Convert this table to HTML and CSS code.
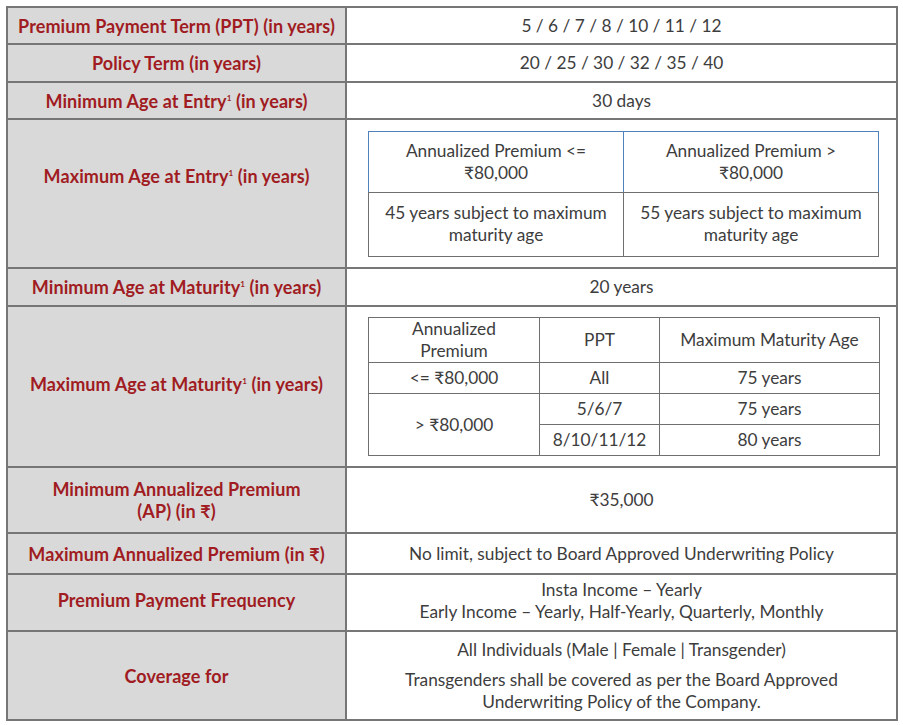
FILE: index.html
```html
<!DOCTYPE html>
<html lang="en">
<head>
<meta charset="utf-8">
<title>Policy Details</title>
<link rel="stylesheet" href="styles.css">
</head>
<body>
<table class="spec">
  <colgroup><col class="col-h"><col class="col-v"></colgroup>
  <tr class="r1"><th>Premium Payment Term (PPT) (in years)</th><td>5 / 6 / 7 / 8 / 10 / 11 / 12</td></tr>
  <tr class="r2"><th>Policy Term (in years)</th><td>20 / 25 / 30 / 32 / 35 / 40</td></tr>
  <tr class="r3"><th>Minimum Age at Entry<sup>1</sup> (in years)</th><td>30 days</td></tr>
  <tr class="r4"><th class="lift-lg">Maximum Age at Entry<sup>1</sup> (in years)</th>
    <td class="nest-cell">
      <table class="inner inner-entry">
        <tr class="ie-head"><td>Annualized Premium &lt;=<br>₹80,000</td><td>Annualized Premium &gt;<br>₹80,000</td></tr>
        <tr class="ie-body"><td>45 years subject to maximum<br>maturity age</td><td>55 years subject to maximum<br>maturity age</td></tr>
      </table>
    </td></tr>
  <tr class="r5"><th>Minimum Age at Maturity<sup>1</sup> (in years)</th><td>20 years</td></tr>
  <tr class="r6"><th class="lift-sm">Maximum Age at Maturity<sup>1</sup> (in years)</th>
    <td class="nest-cell">
      <table class="inner inner-mat">
        <colgroup><col class="m1"><col class="m2"><col class="m3"></colgroup>
        <tr class="im-head"><td>Annualized<br>Premium</td><td>PPT</td><td>Maximum Maturity Age</td></tr>
        <tr class="im-row"><td>&lt;= ₹80,000</td><td>All</td><td>75 years</td></tr>
        <tr class="im-row"><td rowspan="2">&gt; ₹80,000</td><td>5/6/7</td><td>75 years</td></tr>
        <tr class="im-row"><td>8/10/11/12</td><td>80 years</td></tr>
      </table>
    </td></tr>
  <tr class="r7"><th>Minimum Annualized Premium<br>(AP) (in ₹)</th><td>₹35,000</td></tr>
  <tr class="r8"><th>Maximum Annualized Premium (in ₹)</th><td>No limit, subject to Board Approved Underwriting Policy</td></tr>
  <tr class="r9"><th class="lift-sm">Premium Payment Frequency</th><td class="lift-xs">Insta Income – Yearly<br>Early Income – Yearly, Half-Yearly, Quarterly, Monthly</td></tr>
  <tr class="r10"><th>Coverage for</th><td><p class="para">All Individuals (Male | Female | Transgender)</p><p class="para">Transgenders shall be covered as per the Board Approved<br>Underwriting Policy of the Company.</p></td></tr>
</table>
</body>
</html>
```

FILE: styles.css
```css
html, body {
  margin: 0;
  padding: 0;
  background: #ffffff;
}
body {
  padding: 6px 0 0 6px;
  font-family: "Lato", "Open Sans", sans-serif;
  color: #3d3d3d;
}
.spec {
  border-collapse: collapse;
  table-layout: fixed;
  width: 890px;
}
.col-h { width: 339px; }
.col-v { width: 551px; }
.spec > tbody > tr > th,
.spec > tbody > tr > td {
  border: 2px solid #767676;
  text-align: center;
  vertical-align: middle;
  padding: 0 6px;
  box-sizing: border-box;
}
.spec > tbody > tr > th {
  background: #d9d9d9;
  color: #a01c22;
  font-weight: 700;
  font-size: 18px;
  line-height: 22px;
  letter-spacing: 0.1px;
}
.spec > tbody > tr > td {
  font-size: 17.3px;
  line-height: 22px;
}
.spec > tbody > tr > th.lift-lg { padding-bottom: 36px; }
.spec > tbody > tr > th.lift-sm { padding-bottom: 6px; }
.spec > tbody > tr > td.lift-xs { padding-bottom: 3px; }
sup {
  font-size: 8px;
  line-height: 0;
  vertical-align: 7px;
}
.r1 { height: 37px; }
.r2 { height: 38px; }
.r3 { height: 37px; }
.r4 { height: 149px; }
.r5 { height: 38px; }
.r6 { height: 161px; }
.r7 { height: 66px; }
.r8 { height: 41px; }
.r9 { height: 57px; }
.r10 { height: 89px; }
.spec > tbody > tr > td.nest-cell {
  padding: 0;
}
.inner {
  border-collapse: collapse;
  table-layout: fixed;
  width: 511px;
  margin: 0 auto 0 21px;
}
.inner td {
  text-align: center;
  vertical-align: middle;
  padding: 0 4px;
  font-size: 17.3px;
  line-height: 22px;
  color: #3d3d3d;
  border: 1.5px solid #6f6f6f;
}
.ie-head { height: 61px; }
.ie-body { height: 64px; }
.ie-head td {
  border-top-color: #4f81bd;
  border-left-color: #4f81bd;
  border-right-color: #4f81bd;
}
.m1 { width: 171px; }
.m2 { width: 120px; }
.m3 { width: 220px; }
.im-head { height: 45px; }
.im-row { height: 31px; }
.para {
  margin: 0;
}
.para + .para {
  margin-top: 8px;
}
```
